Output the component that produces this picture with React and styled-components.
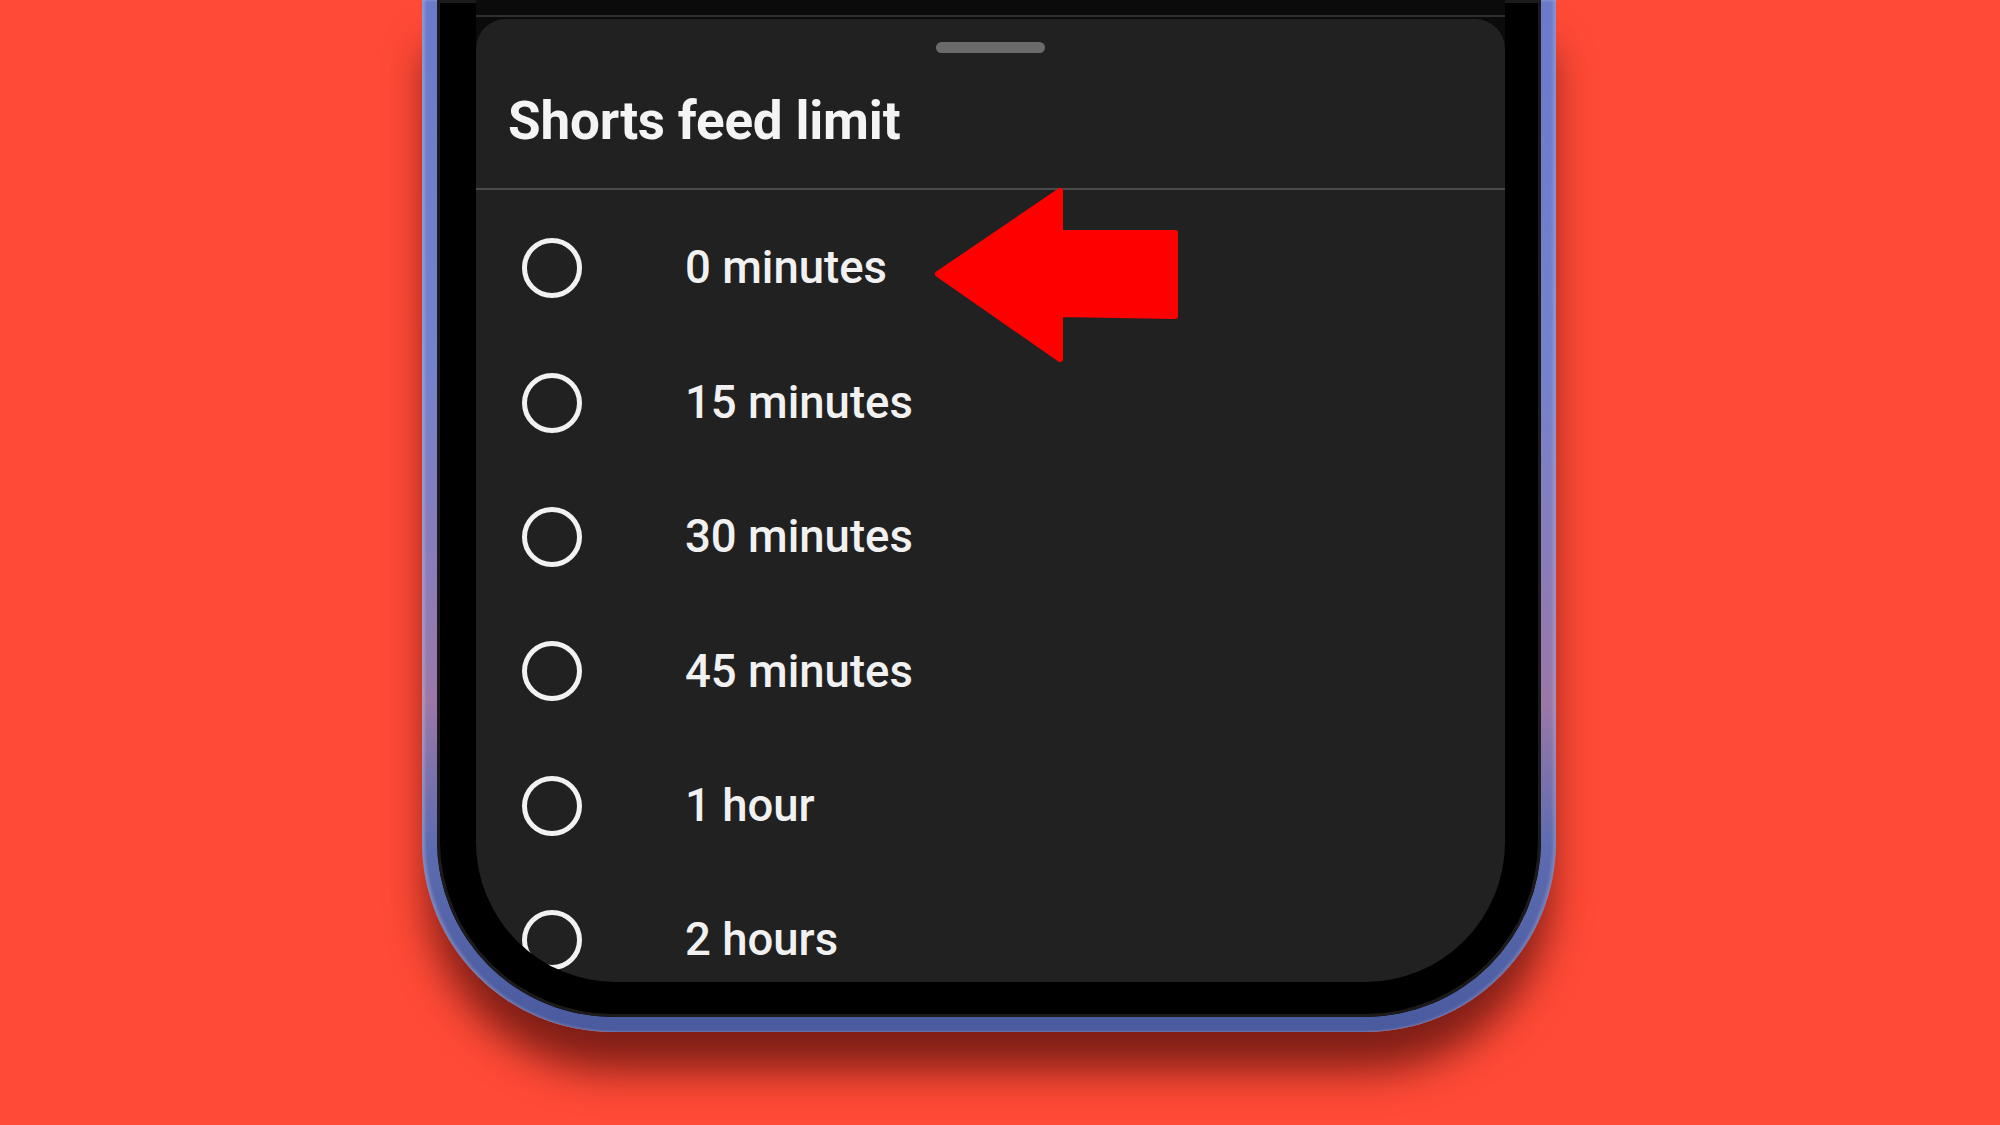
import React from "react";
import styled, { createGlobalStyle } from "styled-components";

const Global = createGlobalStyle`
  html, body { margin: 0; padding: 0; }
  body { background: #ff4a36; font-family: Roboto, "Noto Sans", sans-serif; }
  * { box-sizing: border-box; }
`;

const Page = styled.div`
  width: 2000px;
  height: 1125px;
  overflow: hidden;
  background: #ff4a36;
  display: flex;
  align-items: flex-start;
  padding-left: 422px;
`;

const Phone = styled.div`
  width: 1134px;
  height: 1032px;
  padding: 0 15px 15px 15px;
  border-radius: 0 0 190px 190px;
  background: linear-gradient(
    180deg,
    #6b7ac9 0%,
    #7382cc 35%,
    #8a7cb8 55%,
    #9b78a8 68%,
    #5d6cb0 82%,
    #4a5a9e 100%
  );
  box-shadow: 0 44px 40px -6px rgba(40, 0, 0, 0.6),
    inset 3px 0 3px rgba(255, 255, 255, 0.22),
    inset -3px 0 3px rgba(255, 255, 255, 0.18);
`;

const Bezel = styled.div`
  height: 100%;
  background: #000;
  border-radius: 0 0 176px 176px;
  padding: 0 36px 35px 39px;
  box-shadow: inset 0 0 0 3px #1d1a1c;
`;

const Screen = styled.div`
  height: 100%;
  background: #0b0b0b;
  border-radius: 0 0 140px 140px;
  overflow: hidden;
  display: flex;
  flex-direction: column;
`;

const TopStrip = styled.div`
  height: 17px;
  flex: none;
  border-bottom: 2px solid #2f2f2f;
  margin-bottom: 2px;
`;

const Sheet = styled.div`
  position: relative;
  flex: 1;
  background: #212121;
  border-radius: 30px 30px 0 0;
  display: flex;
  flex-direction: column;
`;

const Handle = styled.div`
  align-self: center;
  width: 109px;
  height: 11px;
  margin-top: 23px;
  border-radius: 6px;
  background: #6b6b6b;
  flex: none;
`;

const Header = styled.div`
  padding: 42px 32px 40px;
  border-bottom: 2px solid #4a4a4a;
`;

const Title = styled.h1`
  margin: 0;
  font-family: Roboto, "Noto Sans", sans-serif;
  font-weight: 700;
  font-size: 53px;
  line-height: 53px;
  color: #f4f4f4;
  letter-spacing: -0.2px;
`;

const List = styled.div`
  padding-top: 11px;
  display: flex;
  flex-direction: column;
`;

const Row = styled.div`
  height: 134.4px;
  display: flex;
  align-items: center;
  padding-left: 46px;
  gap: 103px;
  flex: none;
`;

const Radio = styled.span`
  width: 60px;
  height: 60px;
  border-radius: 50%;
  border: 5px solid #f2f2f2;
  flex: none;
`;

const Label = styled.span`
  font-family: Roboto, "Noto Sans", sans-serif;
  font-weight: 500;
  font-size: 45.5px;
  letter-spacing: 0;
  line-height: 1;
  color: #f1f1f1;
`;

const Arrow = styled.svg`
  position: absolute;
  left: 454px;
  top: 167px;
  width: 255px;
  height: 180px;
  overflow: visible;
`;

const options = [
  "0 minutes",
  "15 minutes",
  "30 minutes",
  "45 minutes",
  "1 hour",
  "2 hours",
];

export default function App() {
  return (
    <>
      <Global />
      <Page>
        <Phone>
          <Bezel>
            <Screen>
              <TopStrip />
              <Sheet>
                <Handle />
                <Header>
                  <Title>Shorts feed limit</Title>
                </Header>
                <List>
                  {options.map((o) => (
                    <Row key={o}>
                      <Radio />
                      <Label>{o}</Label>
                    </Row>
                  ))}
                </List>
                <Arrow viewBox="0 0 255 180">
                  <polygon
                    points="8,88 130,5 130,47 245,47 245,130 130,128 130,173"
                    fill="#ff0000"
                    stroke="#ff0000"
                    strokeWidth="6"
                    strokeLinejoin="round"
                  />
                </Arrow>
              </Sheet>
            </Screen>
          </Bezel>
        </Phone>
      </Page>
    </>
  );
}
